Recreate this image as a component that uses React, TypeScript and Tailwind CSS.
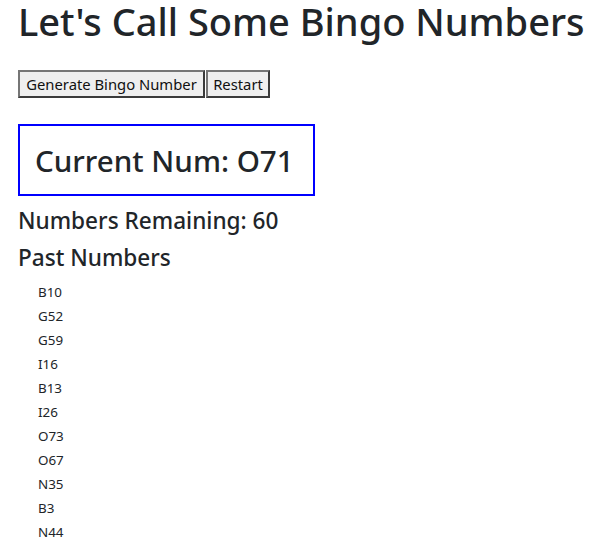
export default function App() {
  const pastNumbers = ['B10', 'G52', 'G59', 'I16', 'B13', 'I26', 'O73', 'O67', 'N35', 'B3', 'N44'];

  return (
    <div className="min-h-screen bg-white pl-[18px] text-[#212529] font-['Noto_Sans',sans-serif]">
      <h1 className="m-0 pb-[5px] text-[38px] font-medium leading-[42px] whitespace-nowrap">Let's Call Some Bingo Numbers</h1>

      {/* controls */}
      <div className="mt-[23px] flex">
        <button className="h-[28px] w-[187px] border-2 border-t-[#767676] border-l-[#767676] border-r-[#3b3b3b] border-b-[#3b3b3b] bg-[#efefef] text-center text-[14.8px] leading-none text-[#111]">
          Generate Bingo Number
        </button>
        <button className="ml-px h-[28px] w-[64px] border-2 border-t-[#767676] border-l-[#767676] border-r-[#3b3b3b] border-b-[#3b3b3b] bg-[#efefef] text-center text-[14.8px] leading-none text-[#111]">
          Restart
        </button>
      </div>

      <div className="mt-[26px] h-[72px] w-[297px] border-2 border-[#0000ff] pl-[15px] pt-[16px]">
        <h2 className="m-0 text-[29.6px] font-medium leading-[38px] whitespace-nowrap">Current Num: O71</h2>
      </div>

      <h4 className="mt-[10px] text-[22.6px] font-medium leading-[29px]">Numbers Remaining: 60</h4>
      <h4 className="mt-[8px] text-[22.6px] font-medium leading-[29px]">Past Numbers</h4>

      <ul className="mt-[8px] pl-[20px]">
        {pastNumbers.map((n) => (
          <li key={n} className="text-[13.4px] leading-[24px]">
            {n}
          </li>
        ))}
      </ul>
    </div>
  );
}
